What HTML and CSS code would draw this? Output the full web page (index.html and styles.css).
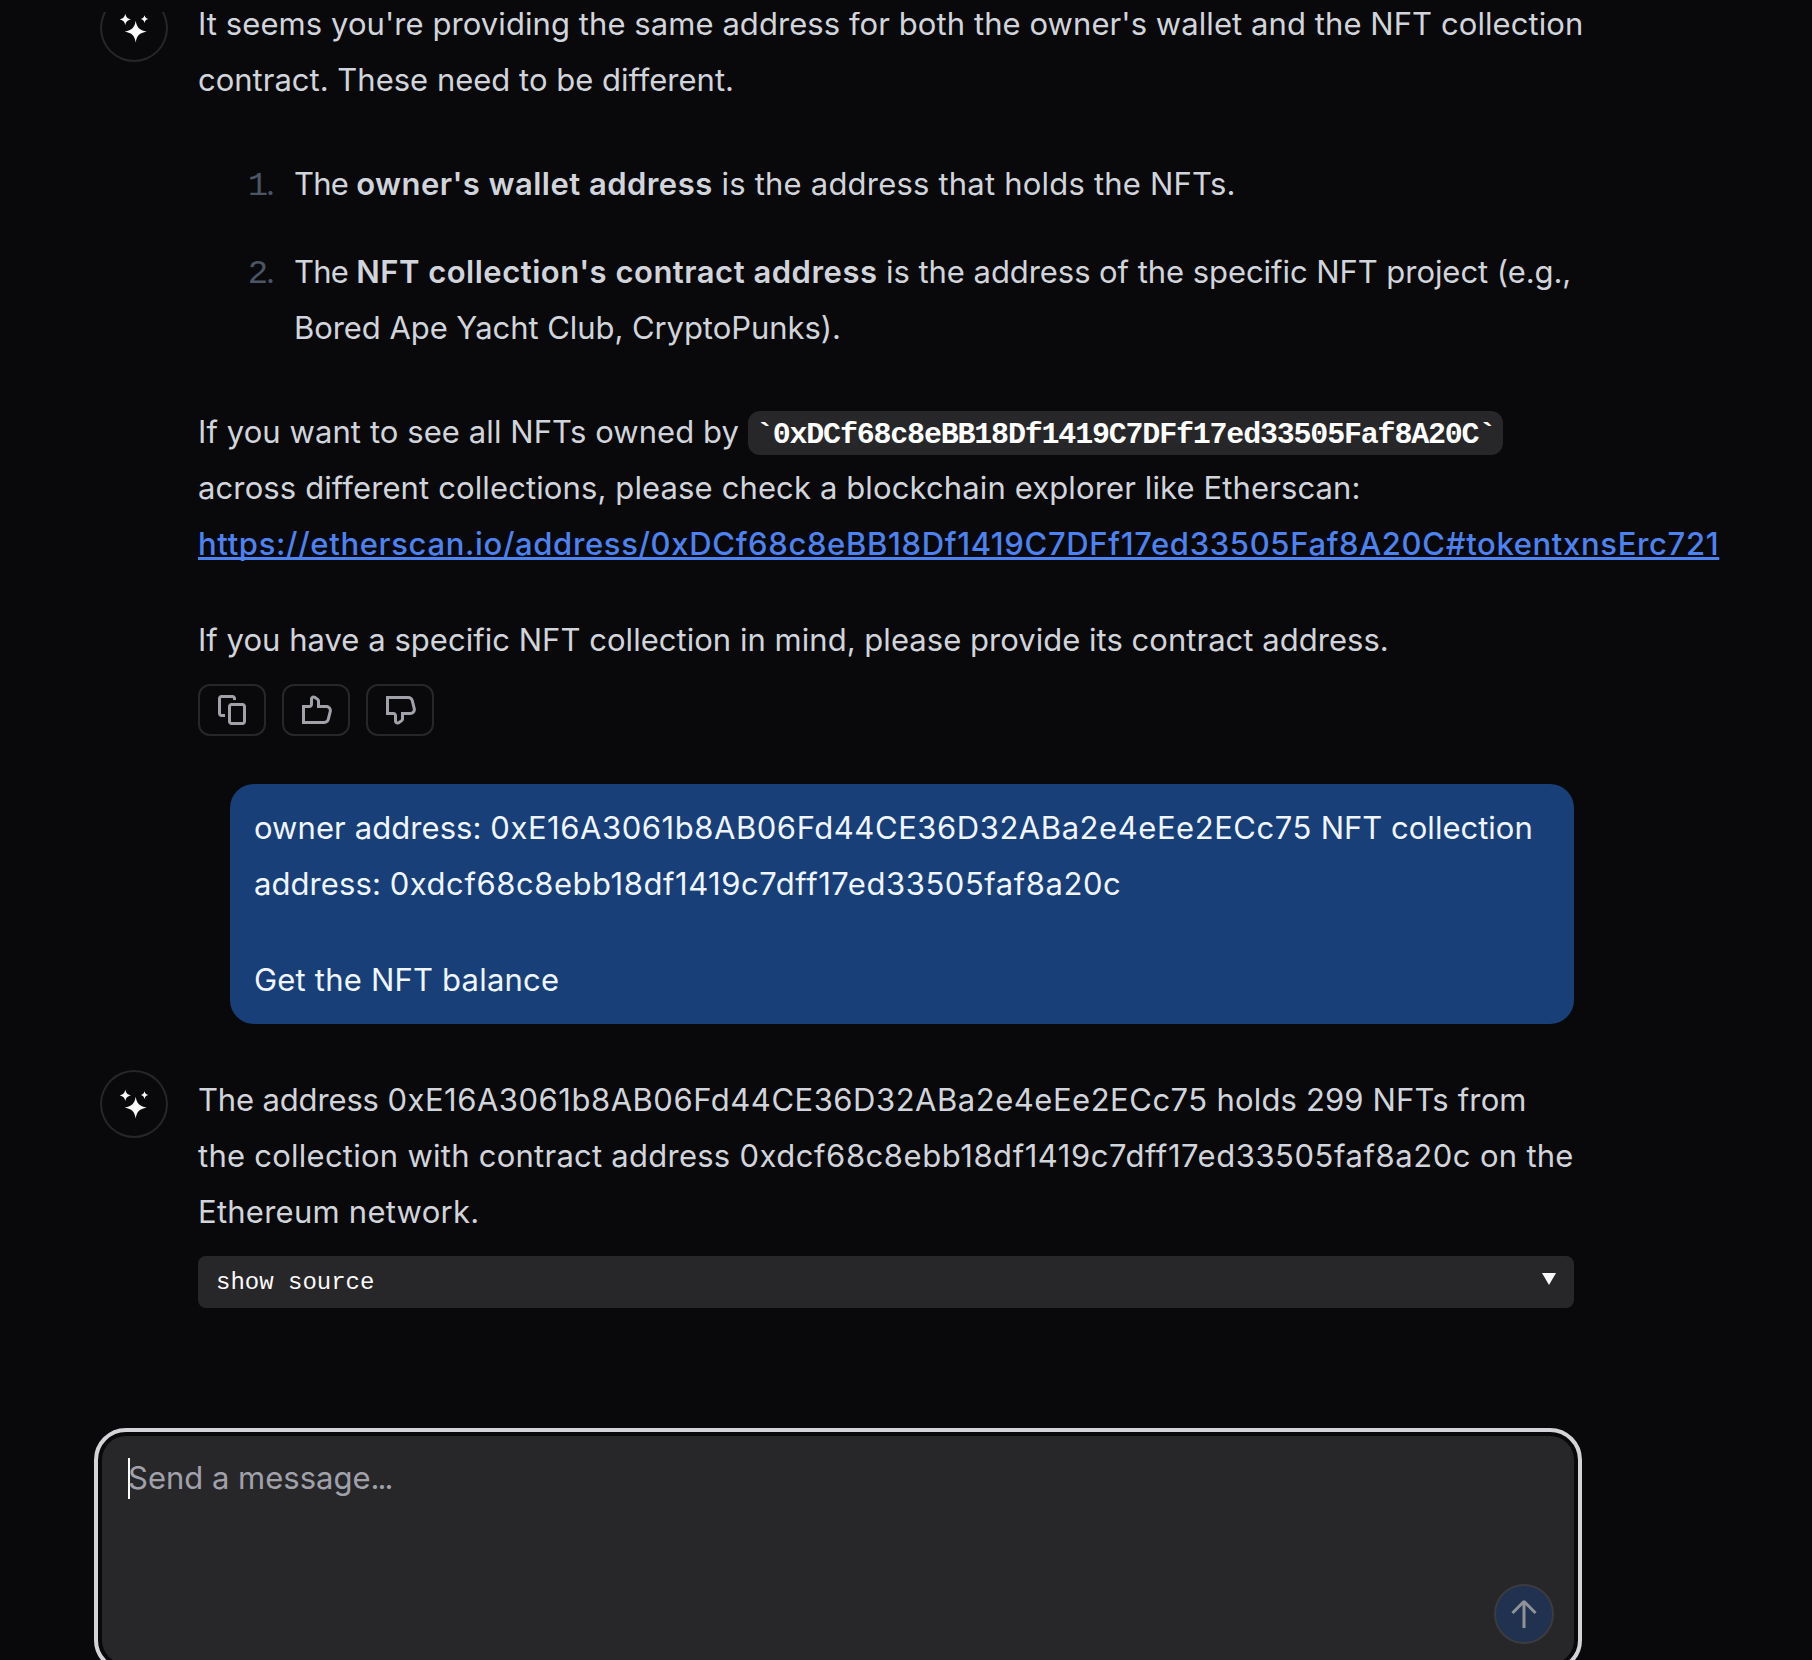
FILE: index.html
```html
<!DOCTYPE html>
<html lang="en">
<head>
<meta charset="utf-8">
<title>Chat</title>
<link rel="stylesheet" href="styles.css">
</head>
<body>
<svg class="defs" aria-hidden="true">
  <symbol id="sparkles" viewBox="0 0 68 68">
    <path d="M35.7 26.7C37 33.6 39.200 36 46.700 37.600C39.200 39.200 37 41.600 35.700 48.500C34.400 41.600 32.200 39.200 24.700 37.600C32.200 36 34.400 33.600 35.700 26.700Z"/>
    <path d="M25.300 19.800C26.200 23.400 27.200 24.500 31 25.400C27.200 26.300 26.200 27.400 25.300 31C24.400 27.400 23.400 26.300 19.600 25.400C23.400 24.500 24.400 23.400 25.300 19.800Z"/>
    <path d="M44.500 21.300C45.200 23.800 46 24.500 48.300 25.100C46 25.700 45.200 26.400 44.500 28.900C43.800 26.400 43 25.700 40.700 25.100C43 24.500 43.800 23.800 44.500 21.300Z"/>
  </symbol>
  <symbol id="thumb" viewBox="0 0 16 16">
    <path fill-rule="evenodd" d="M6.89531 2.23972C6.72984 2.12153 6.5 2.23981 6.5 2.44315V5.25001C6.5 6.21651 5.7165 7.00001 4.75 7.00001H2.5V13.5H12.1884C12.762 13.5 13.262 13.1096 13.4011 12.5532L14.4011 8.55318C14.5984 7.76425 14.0017 7.00001 13.1884 7.00001H9.25H8.5V6.25001V3.51458C8.5 3.43384 8.46101 3.35807 8.39531 3.31114L6.89531 2.23972ZM5 2.44315C5 1.01975 6.6089 0.191779 7.76717 1.01912L9.26717 2.09054C9.72706 2.41904 10 2.94941 10 3.51458V5.50001H13.1884C14.9775 5.50001 16.2903 7.18133 15.8563 8.91698L14.8563 12.917C14.5503 14.1412 13.4503 15 12.1884 15H1.75H1V14.25V6.25001V5.50001H1.75H4.75C4.88807 5.50001 5 5.38808 5 5.25001V2.44315Z"/>
  </symbol>
</svg>
<div class="app">
  <main class="thread">
    <article class="message first">
      <div class="avatar"><svg><use href="#sparkles"/></svg></div>
      <div class="body">
        <p><span class="t07">It seems you're providing the same address for both the owner's wallet and the NFT collection</span><br>contract. These need to be different.</p>
        <ol>
          <li><span class="num"><i>1</i>.</span><div><span class="the">The </span><strong>owner's wallet address</strong><span class="t20"> is the address that holds the NFTs.</span></div></li>
          <li><span class="num"><i>2</i>.</span><div><span class="the">The </span><strong class="wide">NFT collection's contract address</strong><span class="tn"> is the address of the specific NFT project (e.g.,<br>Bored Ape Yacht Club, CryptoPunks).</span></div></li>
        </ol>
        <p><span class="t08">If you want to see all NFTs owned by </span><code>`0xDCf68c8eBB18Df1419C7DFf17ed33505Faf8A20C`</code><br><span class="t12">across different collections, please check a blockchain explorer like Etherscan:</span><br><a class="link">https://etherscan.io/address/0xDCf68c8eBB18Df1419C7DFf17ed33505Faf8A20C#tokentxnsErc721</a></p>
        <p class="last t03">If you have a specific NFT collection in mind, please provide its contract address.</p>
        <div class="actions">
          <button type="button" aria-label="Copy"><svg viewBox="0 0 16 16"><path fill-rule="evenodd" d="M2.75 0.5C1.7835 0.5 1 1.2835 1 2.25V9.75C1 10.7165 1.7835 11.5 2.75 11.5H3.75H4.5V10H3.75H2.75C2.61193 10 2.5 9.88807 2.5 9.75V2.25C2.5 2.11193 2.61193 2 2.75 2H8.25C8.38807 2 8.5 2.11193 8.5 2.25V3H10V2.25C10 1.2835 9.2165 0.5 8.25 0.5H2.75ZM7.75 4.5C6.7835 4.5 6 5.2835 6 6.25V13.75C6 14.7165 6.7835 15.5 7.75 15.5H13.25C14.2165 15.5 15 14.7165 15 13.75V6.25C15 5.2835 14.2165 4.5 13.25 4.5H7.75ZM7.5 6.25C7.5 6.11193 7.61193 6 7.75 6H13.25C13.3881 6 13.5 6.11193 13.5 6.25V13.75C13.5 13.8881 13.3881 14 13.25 14H7.75C7.61193 14 7.5 13.8881 7.5 13.75V6.25Z"/></svg></button>
          <button type="button" aria-label="Upvote"><svg><use href="#thumb"/></svg></button>
          <button type="button" aria-label="Downvote"><svg class="flip"><use href="#thumb"/></svg></button>
        </div>
      </div>
    </article>

    <article class="bubble">
      <p><span class="t08">owner address: </span><span class="hex">0xE16A3061b8AB06Fd44CE36D32ABa2e4eEe2ECc75</span> NFT collection<br><span class="t08">address: </span><span class="hex">0xdcf68c8ebb18df1419c7dff17ed33505faf8a20c</span></p>
      <p class="t20">Get the NFT balance</p>
    </article>

    <article class="message">
      <div class="avatar"><svg><use href="#sparkles"/></svg></div>
      <div class="body">
        <p><span class="tight">The address </span><span class="hex snug">0xE16A3061b8AB06Fd44CE36D32ABa2e4eEe2ECc75</span><span class="t14"> holds 299 NFTs from</span><br><span class="t25">the collection with contract address <span class="hex">0xdcf68c8ebb18df1419c7dff17ed33505faf8a20c</span> on the</span><br><span class="t25">Ethereum network.</span></p>
        <div class="source"><span>show source</span><svg viewBox="0 0 14 12"><path d="M0 0H14L7 12Z"/></svg></div>
      </div>
    </article>
  </main>

  <form class="composer">
    <div class="field"><span class="caret"></span><span class="placeholder">Send a message<span class="dots">...</span></span></div>
    <button class="send" type="button" aria-label="Send"><svg viewBox="0 0 16 16"><path d="M8.70711 1.39644C8.31659 1.00592 7.68342 1.00592 7.2929 1.39644L2.21968 6.46966L1.68935 6.99999L2.75001 8.06065L3.28034 7.53032L7.25001 3.56065V14.25V15H8.75001V14.25V3.56065L12.7197 7.53032L13.25 8.06065L14.3107 6.99999L13.7803 6.46966L8.70711 1.39644Z"/></svg></button>
  </form>
</div>
</body>
</html>
```
FILE: styles.css
```css
* { box-sizing: border-box; margin: 0; padding: 0; }

body {
  background: #09090b;
  color: #d1d5db;
  font: 400 31px/56px Inter, "Liberation Sans", sans-serif;
  overflow: hidden;
}

.defs { display: none; }
svg { display: block; fill: currentColor; }

.app {
  height: 1660px;
  padding-top: 12px;
  display: flex;
  flex-direction: column;
  overflow: hidden;
}

.thread {
  flex: none;
  height: 1424px;
  padding: 0 238px 0 100px;
  display: flex;
  flex-direction: column;
  overflow: hidden;
}

.message { display: flex; gap: 30px; white-space: nowrap; }
.message.first { margin-top: -18px; }
.body { flex: 1; min-width: 0; padding-top: 2px; }

.avatar {
  flex: none;
  width: 68px;
  height: 68px;
  border-radius: 50%;
  box-shadow: inset 0 0 0 2px #27272a;
  color: #fafafa;
}
.avatar svg { width: 68px; height: 68px; }

/* tracking per run of text */
.t03 { letter-spacing: 0.03px; }
.t07 { letter-spacing: 0.07px; }
.t08 { letter-spacing: 0.08px; }
.t12 { letter-spacing: 0.12px; }
.t14 { letter-spacing: 0.14px; }
.t20 { letter-spacing: 0.2px; }
.t25 { letter-spacing: 0.25px; }
.tn { letter-spacing: -0.06px; }
.tight { letter-spacing: -0.15px; }
.the { letter-spacing: -0.75px; }
.hex { letter-spacing: 0.55px; }
.hex.snug { letter-spacing: 0.52px; }

ol {
  list-style: none;
  margin: 48px 0;
  display: flex;
  flex-direction: column;
  gap: 32px;
}
li { display: flex; }
.num { width: 96px; padding-right: 19px; text-align: right; color: #4b5563; }
.num i { font-family: "Liberation Mono", monospace; font-style: normal; font-size: 34px; line-height: 1; letter-spacing: -2px; }
strong { font-weight: 600; letter-spacing: 0.46px; }
strong.wide { letter-spacing: 0.5px; }

code {
  padding: 7px 8px 3px;
  border-radius: 12px;
  background: #27272a;
  color: #fff;
  font: 700 30px/1 "Liberation Mono", monospace;
  letter-spacing: -1.2px;
}

.link {
  color: #4d82f3;
  font-weight: 500;
  letter-spacing: 0.655px;
  text-decoration: underline;
  text-decoration-thickness: 3px;
  text-underline-offset: 2px;
  text-decoration-skip-ink: none;
}

.last { margin-top: 40px; }

.actions { display: flex; gap: 16px; margin-top: 16px; }
.actions button {
  width: 68px;
  height: 52px;
  display: grid;
  place-items: center;
  background: none;
  border: 2px solid #27272a;
  border-radius: 12px;
  color: #a1a1aa;
}
.actions svg { width: 32px; height: 32px; }
.flip { transform: scaleY(-1); }

.bubble {
  margin: 48px 0 46px 130px;
  padding: 16px 24px;
  display: flex;
  flex-direction: column;
  gap: 40px;
  border-radius: 24px;
  background: #193f78;
  color: #eff6ff;
  white-space: nowrap;
}

.source {
  height: 52px;
  margin-top: 16px;
  padding: 2px 18px 0;
  display: flex;
  align-items: center;
  justify-content: space-between;
  border-radius: 8px;
  background: #27272a;
  color: #fafafa;
  font: 24px/48px "Liberation Mono", monospace;
}
.source svg { width: 14px; height: 12px; margin-bottom: 8px; }

.composer {
  flex: none;
  width: 1472px;
  height: 228px;
  margin-left: 102px;
  padding: 14px 20px 20px 26px;
  display: flex;
  justify-content: space-between;
  border-radius: 24px;
  outline: 4px solid #d4d4d8;
  outline-offset: 4px;
  background: #27272a;
}
.field { display: flex; height: 56px; color: #a1a1aa; }
.caret { width: 2px; height: 41px; margin: 8px -2px 0 0; background: #fff; }
.dots { letter-spacing: -1.9px; }
.send {
  align-self: flex-end;
  width: 60px;
  height: 60px;
  display: grid;
  place-items: center;
  border: 2px solid #3b3b40;
  border-radius: 50%;
  background: #203250;
  color: #909298;
}
.send svg { width: 32px; height: 32px; }
```
